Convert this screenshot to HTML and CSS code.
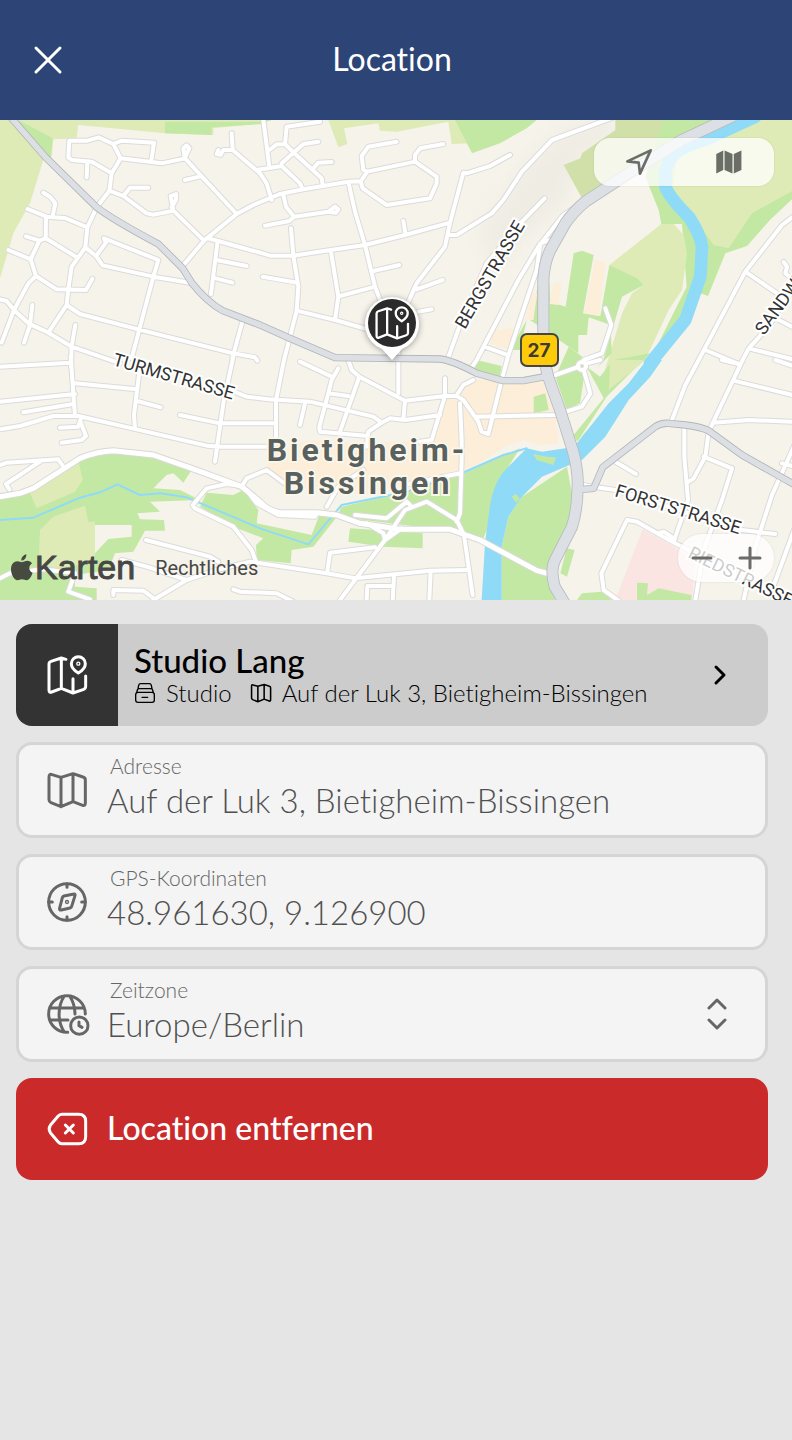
FILE: index.html
```
<!DOCTYPE html>
<html lang="de">
<head>
  <meta charset="UTF-8">
  <meta name="viewport" content="width=device-width, initial-scale=1.0">
  <title>Location</title>
  <link rel="stylesheet" href="styles.css">
</head>
<body>

  <!-- Shared icons -->
  <svg class="sprite" aria-hidden="true">
    <symbol id="icon-map" viewBox="0 0 126 126">
      <path d="M9 24Q9 13 18 17L45 25L81 14L111 24Q118 26 118 33V102Q118 111 110 109L81 98L45 113L15 101Q9 98 9 92ZM45 25V113M81 14V98"/>
    </symbol>
    <symbol id="icon-map-pin" viewBox="0 0 126 126">
      <path d="M60 16L46 12L15 22Q9 24 9 30V108Q9 117 17 114L46 103L81 117L113 106Q119 104 119 97V66M46 12V103M81 74V117M97 8a21 21 0 0 1 21 21c0 13-13 23-21 28c-8-5-21-15-21-28a21 21 0 0 1 21-21z"/>
      <circle cx="97" cy="29" r="2"/>
    </symbol>
  </svg>

  <header class="topbar">
    <button class="close" type="button" aria-label="Schließen">
      <svg viewBox="0 0 32 32"><path d="M4 4L28 28M28 4L4 28"/></svg>
    </button>
    <h1>Location</h1>
  </header>

  <section class="map" aria-label="Karte">
    <svg class="map-canvas" viewBox="0 0 792 480" preserveAspectRatio="xMidYMid slice">
      <defs>
        <g id="streets">
          <path d="M205 112L208 62H262L296 52L340 72L362 115L335 160L328 212L290 262L262 322L256 382L215 440L205 508L200 555L145 638M340 72L365 62L462 68L454 122M362 115L485 130L555 115L550 85L560 76L568 85L556 110M205 112L215 120L275 125L335 160M262 125L260 172M555 115L710 282M598 170L555 180M328 212L370 228L440 280L460 284L520 272L612 362M370 228L390 203H445M520 272L512 228L528 222V240L515 262M548 438L612 362L710 282L760 255L840 222M622 354L780 398M652 370L633 522M650 420L740 438M648 475L697 488M695 40L698 90L780 160L800 190L815 240M698 90H670L662 104L650 102L655 90M770 150L845 138M790 0L808 140M130 218L150 230L166 250L158 288M83 267L140 290L195 294L262 322M138 290L137 355M78 349L118 362L137 355L228 410M118 362L92 418L108 468M25 390L92 418M108 468L85 490L42 570L5 668M108 468L170 508L258 510L277 476M0 538L20 543L42 570L85 610L145 638L215 680L360 730M97 555L90 615L72 668M200 555L240 582L415 628L700 700L765 712L772 722M226 615L215 680L213 740M256 382L288 408L308 436L460 470L570 488M288 408L318 368L312 355L475 420L460 470L395 715M727 605L697 715"/>
          <path transform="translate(780)" d="M180 5L80 20L75 72L100 97L185 175L188 195M28 90L50 73H75M65 130L130 72L175 65M160 145L175 128L215 126M65 138L120 190L128 208M60 222L130 208L265 185L302 184M70 225L78 260L102 290L205 275L225 260L235 268L228 278L205 275M102 290L88 303L15 317M410 65L325 80L305 108L310 150L322 155L465 125L530 170V190L510 235L380 255L308 205L302 184L322 155M550 72L480 85L465 105V125M265 185L285 275L315 375L345 500L362 545M0 398L30 407H100L212 390L315 375L435 345L570 308M430 303L437 345M93 325L100 407L115 500L110 572L72 720L48 840V950M8 470L112 488M212 390L235 530L225 600M240 528L345 500M340 453L418 435M110 572L225 600L330 630M750 105L690 138L620 160L610 158L570 308L555 380L470 490L430 580M570 345H590L695 280L730 240L786 155L876 60L1060 -8M470 508L548 480M475 575L515 568M562 720L600 615L680 430L786 305L854 235M415 690V820M650 720L775 480L835 380L910 285L946 262M630 750L650 720M745 706L830 450L841 370L886 355M675 680L745 706L725 780L685 942L665 935L655 905L610 840L590 828"/>
          <path transform="translate(1566)" d="M250 565L268 615L240 700L185 720M820 285L780 315L670 455L530 720L490 795L448 905M670 455L780 530M810 475L790 460L795 440L785 426M550 690L650 732M770 600L820 625M810 500L740 620L680 685L662 720L560 935M680 685L820 720"/>
          <path transform="translate(0 720)" d="M0 20L210 8M212 -10L225 168M225 70L410 88M0 125L225 102M70 157L220 132M0 208L60 198L160 168H235L410 208L620 257L660 260H810M243 175L235 200L180 203M243 190L258 228L245 240L185 248M420 20L402 165L405 205M412 123L482 142M702 -20L670 130L645 305M540 165L660 190H828M690 90L740 110L805 118L930 125L1120 170L1145 188M0 315L20 308L175 298L190 320M120 305L18 372L28 388M725 380L740 355L800 330L860 375M725 378L680 372L620 385L578 435L585 445L700 500L755 570L768 605M740 390L770 430L835 465L945 470L950 460M438 540L630 590L655 605M365 600L440 620L560 660M460 720L560 660L650 630L750 605L980 640L1065 655L1290 632L1400 630M340 705V690L430 692L465 718M700 688L720 695L830 700L880 725M0 655L30 640L130 628L225 640L205 695L270 718"/>
          <path transform="translate(780 720)" d="M120 5L215 50M235 25L215 60L205 100L265 108M265 0L275 30L298 50L435 122L555 108H590M298 50L240 215M205 100L178 200L180 215L325 228M135 130L120 195M435 122L430 178M320 260L325 215L365 188L390 175L435 180L540 165M555 55V108L530 190L515 240L480 245M590 105L610 75L640 60M650 170L886 165L966 140L991 100L971 30M600 130L605 240V300L600 460L590 485M200 440L235 380L310 330M430 375L600 340M285 465L380 475L440 425L455 440M240 720L375 540L435 450L500 425L590 480L612 525L638 705M320 490L370 520L375 540L425 505M345 562L210 578L202 635M320 720L322 678H400M402 650L398 720M512 632L508 720"/>
          <path transform="translate(1566 720)" d="M100 45L165 22M195 10L235 0M560 215L550 290L515 355L500 365M600 0L650 12M635 62L820 107M575 188L680 180L820 186M487 205V290L498 420L455 545M545 290L630 325L600 420L545 570L520 720M280 305L342 342M180 375L280 390L660 510L760 522M820 250L750 405L700 560L665 720M820 500L750 690M290 722L245 690L238 640L315 480L345 485L450 545L820 730M405 520L425 515L455 535M760 0L820 20M780 310L820 320"/>
          <circle cx="1746" cy="738" r="12"/>
        </g>
        <path id="avenues" d="M0 1130L60 1120L100 1105L240 1015Q290 994 340 992L460 1005L575 1045L725 1100L780 1145Q800 1170 840 1178H950L1010 1185L1080 1210L1200 1228H1350L1440 1260L1611 1352L1650 1362"/>
        <path id="arterials" d="M35 -5L135 110L290 262Q340 300 475 372L548 445L575 488Q620 545 668 572L780 615L870 655L1005 713L1320 717Q1360 722 1430 760L1510 782H1570L1650 767M1746 1108L1781 1105L1808 1042L1966 920Q1985 908 2006 910L2056 915Q2100 920 2126 932L2226 1005L2341 1070L2390 1098"/>
        <path id="highway" d="M2196 -10L2046 60L1886 160L1756 245Q1720 275 1696 310L1651 390Q1632 430 1630 480V660Q1630 740 1655 800L1680 870L1718 990Q1735 1050 1733 1100Q1732 1170 1716 1220L1665 1320Q1650 1350 1664 1400L1700 1460"/>
      </defs>

      <!-- Geometry is kept at three units per pixel -->
      <g transform="scale(.333333)">
        <path class="field" d="M0 0H790V10L640 25V45L495 40L235 15L230 55L160 58L155 110L130 120L90 250L40 340L0 475ZM985 0H1370L1415 70L1355 72L1345 5L1190 35L1140 32L1135 10L1032 25L1042 72L1015 82Z"/>
        <path class="park" d="M55 0L158 55L153 112L120 90ZM495 5H790V12L635 22V45L495 40ZM780 0H815L780 12ZM1365 0H1610L1580 25L1500 70L1416 100Z"/>
        <path class="shade" d="M1440 330L1580 130L1700 20L1840 0V40L1745 110L1700 235L1480 450Z"/>
        <path class="meadow" d="M1846 0H2180L1966 120L1746 235L1691 135L1741 115L1746 100L1846 30Z"/>
        <path class="park" d="M1936 170L1976 270L1984 312H2046L2060 500L1950 720L1731 965L1800 900L2101 520L2124 528L2176 400L2241 378L2310 300L2390 225V0H1990Z"/>
        <path class="field" d="M2140 0H2390V205L2256 280L2186 385L2141 375L2086 300L2016 210L2030 110ZM1828 435L1984 312H2021L2051 345L2061 400L2046 510L2006 570L1936 720L1826 810L1806 780L1866 580L1896 520L1931 495Z"/>
        <path class="park" d="M1721 400L1746 392L1781 405L1749 580L1801 588L1828 435L1911 475L1931 495L1866 530L1810 720L1790 745L1835 700L1832 615L1766 592L1761 645L1735 645V700L1590 600L1642 380L1651 545L1697 560ZM1706 680L1760 720L1740 850L1700 870L1666 770ZM1760 740L1800 770L1840 720L1950 700L1820 830L1732 965L1721 945L1811 835L1795 805ZM1430 720L1505 738L1500 770L1425 750ZM1580 600L1560 690L1530 690Z"/>
        <path class="field" d="M1831 720H1936L1826 810Z"/>
        <path class="sand" d="M1786 420L1816 430L1796 588L1751 580ZM1661 490L1684 490L1676 555L1648 552ZM1590 520H1612L1600 600H1578ZM1480 630L1540 625L1530 690L1470 670ZM1420 780H1626L1666 890L1676 970L1616 975L1570 960L1525 975L1420 1040L1280 1070L1090 1125L930 1105L840 1090L800 1040L820 1000L930 960L1070 970L1300 960L1340 830Z"/>
        <path class="park" d="M1601 830L1636 820L1646 870L1601 880Z"/>
        <path class="park" d="M0 1130L100 1105L240 1020L340 995L460 1010L575 1050L550 1088L520 1060L500 1065L460 1105L540 1110L600 1140L450 1145L480 1175L412 1180L420 1198L492 1200L495 1232H435L400 1295L345 1300L325 1350L225 1365V1400L290 1405V1440H0ZM620 1118L700 1125L730 1110L775 1170L770 1210L935 1245L960 1180L1015 1185L940 1280L875 1290L872 1330L770 1320L768 1275L790 1255L700 1220L600 1160ZM1560 985L1380 1065L1220 1115L1025 1160L1010 1190L1380 1235L1445 1265L1465 1220L1480 1120L1525 1040ZM1050 1225L1268 1240V1285L1150 1280L1045 1265ZM1700 1285L1724 1290L1701 1370L1681 1360Z"/>
        <path class="ground" d="M285 1215H395V1250L325 1257L285 1300Z"/>
        <path class="field" d="M90 1120L237 1030L248 1080L225 1115L110 1165ZM160 1190L255 1157L265 1205H285V1330L115 1350L120 1230Z"/>
        <path class="park" d="M1525 1190L1566 1130L1701 1040L1716 1120L1706 1230L1646 1330V1380L1666 1440H1505V1280Z"/>
        <path class="pink" d="M1928 1228L2046 1295L2086 1320L2076 1440H1846Z"/>
        <path class="park" d="M1911 1388L1944 1390L1941 1425L1976 1405L2074 1425V1440H1911ZM1746 1420L1806 1415L1836 1440H1731Z"/>

        <path class="river" d="M2266 -10L2126 55Q2050 80 2026 100Q1998 130 1996 160V200Q2010 235 2066 290Q2100 340 2106 380L2101 470L2056 600L1950 730"/>
        <path class="water" d="M1940 720H1986L1951 770L1886 840L1816 950L1746 1020L1696 1040L1626 1070L1566 1130L1525 1190L1505 1280V1440H1445L1455 1270L1468 1170Q1480 1080 1525 1040L1580 985L1626 995L1696 985L1731 970L1826 850L1886 790Z"/>
        <path class="park" d="M1600 1002L1640 1010L1668 1012L1660 1035L1610 1020ZM1535 1130L1548 1122L1560 1137L1548 1148Z"/>
        <path class="stream" d="M0 1200L100 1193L240 1133L300 1117L352 1093L420 1125L480 1120L560 1132L780 1225L925 1273L1025 1155L1220 1115L1380 1062L1510 1005L1580 985"/>

        <use href="#streets" class="street-case"/>
        <use href="#avenues" class="avenue-case"/>
        <use href="#streets" class="street"/>
        <use href="#avenues" class="avenue"/>
        <use href="#arterials" class="arterial-case"/>
        <use href="#highway" class="highway-case"/>
        <use href="#arterials" class="arterial"/>
        <use href="#highway" class="highway"/>
      </g>

      <text class="street-name" transform="translate(112 245) rotate(16)">TURMSTRASSE</text>
      <text class="street-name" transform="translate(465 210) rotate(-60)">BERGSTRASSE</text>
      <text class="street-name" transform="translate(614 376) rotate(17)">FORSTSTRASSE</text>
      <text class="street-name" transform="translate(687 437) rotate(26)">RIEDSTRASSE</text>
      <text class="street-name" transform="translate(764 216) rotate(-54)">SANDWEG</text>

      <text class="city-name" x="367" y="341">Bietigheim-</text>
      <text class="city-name" x="368" y="374">Bissingen</text>

      <rect class="road-shield" x="521" y="214" width="37" height="32" rx="6"/>
      <text class="road-number" x="539" y="237">27</text>

      <g class="marker">
        <path class="marker-body" d="M392 240L382 229A27 27 0 1 1 402 229Z"/>
        <circle class="marker-disc" cx="392" cy="203" r="24"/>
        <use href="#icon-map-pin" class="marker-icon" x="374" y="185" width="36" height="36"/>
      </g>
    </svg>

    <div class="map-controls map-tools">
      <button type="button" aria-label="Mein Standort">
        <svg class="locate" viewBox="0 0 84 84"><path d="M77 7L7 40L41 44L45 77Z"/></svg>
      </button>
      <button type="button" aria-label="Kartentyp">
        <svg class="map-type" viewBox="0 0 88 84"><path d="M4 17L26 6V67L4 78ZM30 6L55 17V78L30 67ZM59 17L83 6V67L59 78Z"/></svg>
      </button>
    </div>

    <div class="map-controls map-zoom">
      <button type="button" aria-label="Verkleinern">
        <svg viewBox="0 0 24 24"><path d="M3 12H21"/></svg>
      </button>
      <button type="button" aria-label="Vergrößern">
        <svg viewBox="0 0 24 24"><path d="M2 12H22M12 2V22"/></svg>
      </button>
    </div>

    <div class="map-credit">
      <span class="brand">
        <svg viewBox="0 0 66 80"><path d="M46 0C47 11 39 20 31 19C30 9 38 2 46 0ZM33 24C38 24 42 20 49 20C55 20 60 23 63 28C51 35 53 51 65 56C61 67 55 78 47 78C42 78 39 75 33 75C27 75 24 78 19 78C10 78 0 61 0 45C0 29 9 21 19 21C25 21 30 24 33 24Z"/></svg>
        Karten
      </span>
      <a href="#">Rechtliches</a>
    </div>
  </section>

  <main class="content">
    <a class="place" href="#">
      <span class="place-icon"><svg class="icon"><use href="#icon-map-pin"/></svg></span>
      <span class="place-text">
        <strong>Studio Lang</strong>
        <span class="place-meta">
          <span>
            <svg class="icon-small" viewBox="0 0 66 66"><path d="M12 31H54Q61 31 61 38V54Q61 61 54 61H12Q5 61 5 54V38Q5 31 12 31ZM8 32L10 24Q11 20 16 20H50Q55 20 56 24L58 32M12 20L14 10Q15 5 20 5H46Q51 5 52 10L54 20M24 46H41"/></svg>
            Studio
          </span>
          <span>
            <svg class="icon-small"><use href="#icon-map"/></svg>
            Auf der Luk 3, Bietigheim-Bissingen
          </span>
        </span>
      </span>
      <svg class="chevron" viewBox="0 0 24 24"><path d="M8 4L16 12L8 20"/></svg>
    </a>

    <div class="field-box">
      <svg class="icon"><use href="#icon-map"/></svg>
      <div class="field-text">
        <label for="address">Adresse</label>
        <input type="text" id="address" value="Auf der Luk 3, Bietigheim-Bissingen">
      </div>
    </div>

    <div class="field-box">
      <svg class="icon" viewBox="0 0 126 126">
        <circle cx="63" cy="63" r="55"/>
        <path d="M63 8V19M63 107V118M8 63H19M107 63H118M84 39L54 45Q50 46 49 50L41 81Q39 88 46 87L72 81Q76 80 77 76L87 44Q88 38 84 39Z"/>
        <circle cx="63" cy="63" r="2"/>
      </svg>
      <div class="field-text">
        <label for="gps">GPS-Koordinaten</label>
        <input type="text" id="gps" value="48.961630, 9.126900">
      </div>
    </div>

    <div class="field-box">
      <svg class="icon" viewBox="0 0 126 126">
        <path d="M118 63A55 55 0 1 0 65 118M12 45H115M12 81H66M55 9C34 40 34 87 55 117M71 9Q87 34 87 63M99 87V98L108 103"/>
        <circle cx="100" cy="98" r="26"/>
      </svg>
      <div class="field-text">
        <label for="timezone">Zeitzone</label>
        <select id="timezone">
          <option>Europe/Berlin</option>
        </select>
      </div>
      <svg class="updown" viewBox="0 0 24 36"><path d="M4 12L12 4L20 12M4 24L12 32L20 24"/></svg>
    </div>

    <button class="remove" type="button">
      <svg class="icon" viewBox="0 0 126 126"><path d="M48 19H98Q119 19 119 40V86Q119 107 98 107H48Q41 107 36 101L13 74Q6 63 13 52L36 25Q41 19 48 19ZM58 51L82 75M82 51L58 75"/></svg>
      <span>Location entfernen</span>
    </button>
  </main>

</body>
</html>
```
FILE: styles.css
```
* {
  box-sizing: border-box;
}

body {
  margin: 0;
  min-height: 100vh;
  background: #e5e5e5;
  color: #000;
  font-family: Lato, "Open Sans", sans-serif;
  font-variant-ligatures: none;
}

button, input, select {
  font: inherit;
  font-variant-ligatures: none;
  color: inherit;
  margin: 0;
  padding: 0;
  border: none;
  background: none;
}

button {
  cursor: pointer;
}

svg {
  display: block;
  flex: none;
}

.sprite {
  position: absolute;
  width: 0;
  height: 0;
}

/* Header */
.topbar {
  display: grid;
  grid-template-columns: 64px 1fr 64px;
  align-items: center;
  height: 120px;
  padding: 0 24px 0 16px;
  background: #2c4576;
  color: #fff;
}

.topbar h1 {
  margin: 0;
  padding-bottom: 4px;
  font-size: 32px;
  font-weight: 400;
  text-align: center;
}

.close svg {
  width: 32px;
  height: 32px;
  margin: 0 auto;
  fill: none;
  stroke: #fff;
  stroke-width: 3;
  stroke-linecap: round;
}

/* Map */
.map {
  position: relative;
  height: 480px;
  overflow: hidden;
  background: #f6f3eb;
  font-family: Inter, Roboto, sans-serif;
}

.map-canvas {
  width: 100%;
  height: 100%;
}

.ground { fill: #f6f3eb; }
.field { fill: #deebb7; }
.meadow { fill: #d1dfa9; }
.park { fill: #c3e8a4; }
.sand { fill: #fceed8; }
.pink { fill: #fae5e2; }
.shade { fill: #efece4; filter: blur(24px); }
.water { fill: #8fdbf7; }

.river, .stream, .street, .street-case, .avenue, .avenue-case,
.arterial, .arterial-case, .highway, .highway-case {
  fill: none;
  stroke-linejoin: round;
  stroke-linecap: round;
}

.river { stroke: #8fdbf7; stroke-width: 38; }
.stream { stroke: #8fdbf7; stroke-width: 6; }
.street-case { stroke: #dbdbda; stroke-width: 18; }
.street { stroke: #fff; stroke-width: 12; }
.avenue-case { stroke: #d8d9d6; stroke-width: 21; }
.avenue { stroke: #fff; stroke-width: 15; }
.arterial-case { stroke: #b2b5b8; stroke-width: 22; }
.arterial { stroke: #dce0e4; stroke-width: 17; }
.highway-case { stroke: #b7babd; stroke-width: 36; }
.highway { stroke: #dce0e4; stroke-width: 31; }

.street-name {
  font-family: Roboto, sans-serif;
  font-size: 18px;
  font-weight: 400;
  fill: #333;
  stroke: #fff;
  stroke-width: 4px;
  paint-order: stroke;
}

.city-name {
  font-family: Roboto, sans-serif;
  font-size: 32px;
  font-weight: 700;
  letter-spacing: 3px;
  text-anchor: middle;
  fill: #59615f;
  stroke: #fbf6ea;
  stroke-width: 4px;
  paint-order: stroke;
}

.road-shield {
  fill: #fdcb0a;
  stroke: #454545;
  stroke-width: 2;
}

.road-number {
  font-size: 19px;
  font-weight: 700;
  text-anchor: middle;
  fill: #3d3a30;
}

.marker {
  filter: drop-shadow(0 1px 3px rgba(0, 0, 0, 0.35));
}

.marker-body { fill: #fff; }
.marker-disc { fill: #2b2b2b; }

.marker-icon {
  fill: none;
  stroke: #fff;
  stroke-width: 8;
  stroke-linejoin: round;
  stroke-linecap: round;
}

.map-controls {
  position: absolute;
  right: 18px;
  display: flex;
  height: 48px;
  background: rgba(255, 255, 255, 0.75);
  box-shadow: 0 0 2px rgba(0, 0, 0, 0.12);
}

.map-controls button {
  flex: 1;
  display: flex;
  align-items: center;
  justify-content: center;
}

.map-tools {
  top: 18px;
  width: 180px;
  border-radius: 16px;
}

.map-zoom {
  bottom: 18px;
  width: 96px;
  border-radius: 24px;
}

.map-tools svg {
  width: 28px;
  height: 28px;
}

.locate {
  fill: none;
  stroke: #6b6e67;
  stroke-width: 8;
  stroke-linejoin: round;
}

.map-type {
  fill: #6b6e67;
}

.map-zoom svg {
  width: 24px;
  height: 24px;
  stroke: #6b6b69;
  stroke-width: 3;
  stroke-linecap: round;
}

.map-credit {
  position: absolute;
  left: 11px;
  bottom: 12px;
  display: flex;
  align-items: center;
  gap: 20px;
  color: #474845;
}

.brand {
  display: flex;
  align-items: center;
  gap: 2px;
  font-family: "Liberation Sans", Arial, sans-serif;
  font-size: 34px;
  line-height: 42px;
  -webkit-text-stroke: 1px #474845;
}

.brand svg {
  width: 22px;
  height: 27px;
  fill: #474a3f;
}

.map-credit a {
  padding-top: 2px;
  color: inherit;
  font-family: Roboto, sans-serif;
  font-size: 20px;
  font-weight: 400;
  text-decoration: none;
}

/* Entries */
.content {
  display: flex;
  flex-direction: column;
  gap: 16px;
  padding: 24px 24px 24px 16px;
}

.icon {
  width: 42px;
  height: 42px;
  overflow: visible;
}

.icon, .icon-small, .chevron, .updown {
  fill: none;
  stroke: currentColor;
  stroke-width: 9;
  stroke-linejoin: round;
  stroke-linecap: round;
}

.place {
  display: flex;
  align-items: center;
  min-height: 102px;
  padding-right: 36px;
  border-radius: 16px;
  overflow: hidden;
  background: #ccc;
  color: #000;
  text-decoration: none;
}

.place-icon {
  display: flex;
  align-items: center;
  justify-content: center;
  align-self: stretch;
  width: 102px;
  background: #333;
  color: #fff;
}

.place-text {
  flex: 1;
  display: flex;
  flex-direction: column;
  padding-left: 16px;
}

.place strong {
  font-size: 33px;
  font-weight: 500;
  line-height: 36px;
}

.place-meta {
  display: flex;
  flex-wrap: wrap;
  gap: 0 18px;
  font-size: 24px;
  font-weight: 300;
  line-height: 30px;
}

.place-meta > span {
  display: flex;
  align-items: center;
  gap: 10px;
}

.icon-small {
  width: 22px;
  height: 22px;
}

.icon-small[viewBox] {
  stroke-width: 4;
}

.chevron {
  width: 24px;
  height: 24px;
  stroke-width: 3;
}

.field-box {
  display: flex;
  align-items: center;
  gap: 19px;
  min-height: 96px;
  padding: 0 36px 0 27px;
  border: 3px solid #d5d5d5;
  border-radius: 16px;
  background: #f4f4f4;
  color: #666;
}

.field-text {
  flex: 1;
  display: flex;
  flex-direction: column;
  min-width: 0;
  padding-bottom: 4px;
}

.field-text label {
  padding-left: 3px;
  font-size: 21px;
  font-weight: 300;
  line-height: 24px;
}

.field-text input, .field-text select {
  width: 100%;
  height: 44px;
  font-size: 33px;
  font-weight: 300;
  color: #505050;
  appearance: none;
  outline: none;
}

.updown {
  width: 24px;
  height: 36px;
  stroke-width: 3;
}

.remove {
  display: flex;
  align-items: center;
  gap: 19px;
  min-height: 102px;
  padding: 0 30px;
  border-radius: 16px;
  background: #cb2a2a;
  color: #fff;
  font-size: 32px;
  font-weight: 500;
}

.remove span {
  padding-bottom: 4px;
}
```
